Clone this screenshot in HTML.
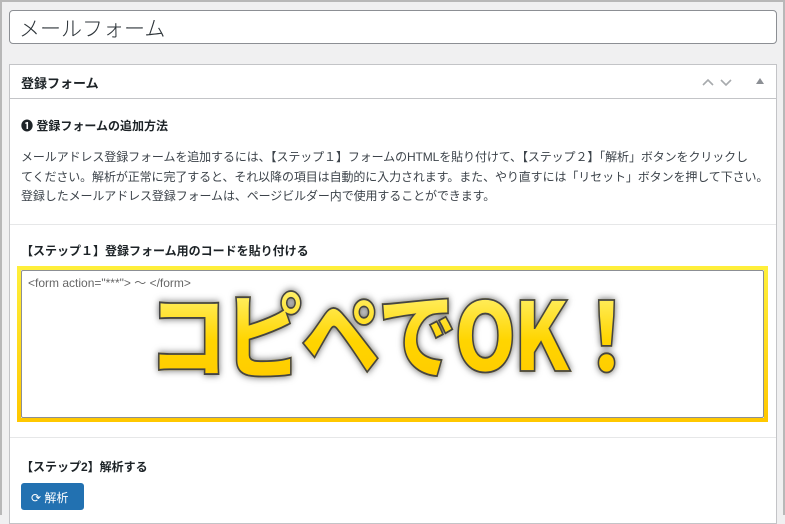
<!DOCTYPE html>
<html><head><meta charset="utf-8"><style>
*{margin:0;padding:0;box-sizing:border-box}
body{width:785px;height:515px;overflow:hidden;background:#f0f0f1;font-family:"Liberation Sans","Noto Sans CJK JP",sans-serif;color:#1d2327;position:relative}
.frame{position:absolute;inset:0;border:2px solid #b8b8b8;border-bottom:none;pointer-events:none;z-index:5}
.title{position:absolute;left:9px;top:10px;width:768px;height:34px;background:#fff;border:1px solid #8c8f94;border-radius:4px;font-size:21px;padding:2px 9px;color:#2c3338;font-weight:300}
.panel{position:absolute;left:9px;top:64px;width:768px;height:460px;background:#fff;border:1px solid #c3c4c7}
.hd{height:34px;border-bottom:1px solid #c3c4c7;font-size:13px;font-weight:bold;padding:8px 11px;position:relative}
.t1{position:absolute;left:11px;top:52px;font-size:12px;font-weight:bold}
.p{position:absolute;left:11px;top:83px;font-size:12px;line-height:19.5px;white-space:nowrap;letter-spacing:-0.1px;color:#3c434a}
.sep{position:absolute;left:0;right:0;height:1px;background:#e6e7e8}
.s1{position:absolute;left:11px;top:177px;font-size:12px;font-weight:bold}
.ta{position:absolute;left:7px;top:201px;width:751px;height:156px;border:4px solid;border-image:linear-gradient(#ffef3a,#ffc800) 1}
.ta .in{position:absolute;inset:0;border:1px solid #8c8f94;border-radius:2px;background:#fff;font-size:12px;color:#666;padding:3px 6px;overflow:hidden}
.big{position:absolute;left:126px;top:12px;font-size:78px;font-weight:900;font-family:"Noto Sans CJK JP",sans-serif;letter-spacing:-3px;line-height:1;white-space:nowrap;background:linear-gradient(#fff57a,#ffd500 60%,#ffcc00);-webkit-background-clip:text;color:transparent;-webkit-text-stroke:1.5px #444;filter:drop-shadow(0 0 3px rgba(0,0,0,.6));transform:scale(1.02,1.22);transform-origin:left top}
.s2{position:absolute;left:11px;top:393px;font-size:12px;font-weight:bold}
.btn{position:absolute;left:11px;top:418px;width:63px;height:27px;background:#2271b1;border-radius:3px;color:#fff;font-size:12px;padding:6px 0 0 10px}
</style></head><body>
<div class="frame"></div>
<div class="title">メールフォーム</div>
<div class="panel">
<div class="hd">登録フォーム
<svg style="position:absolute;left:692px;top:12px" width="40" height="10" viewBox="0 0 40 10"><path d="M1 8 L6 3 L11 8" fill="none" stroke="#a7aaad" stroke-width="1.6"/><path d="M19 3 L24 8 L29 3" fill="none" stroke="#a7aaad" stroke-width="1.6"/></svg>
<svg style="position:absolute;left:746px;top:13px" width="8" height="7"><path d="M0 6 L4 0 L8 6Z" fill="#8c8f94"/></svg>
</div>
<div class="t1">❶ 登録フォームの追加方法</div>
<div class="p">メールアドレス登録フォームを追加するには、【ステップ１】フォームのHTMLを貼り付けて、【ステップ２】「解析」ボタンをクリックし<br>てください。解析が正常に完了すると、それ以降の項目は自動的に入力されます。また、やり直すには「リセット」ボタンを押して下さい。<br>登録したメールアドレス登録フォームは、ページビルダー内で使用することができます。</div>
<div class="sep" style="top:159px"></div>
<div class="s1">【ステップ１】登録フォーム用のコードを貼り付ける</div>
<div class="ta"><div class="in">&lt;form action="***"&gt; 〜 &lt;/form&gt;<div class="big">コピペでOK！</div></div></div>
<div class="sep" style="top:372px"></div>
<div class="s2">【ステップ2】解析する</div>
<div class="btn">⟳ 解析</div>
</div>
</body></html>
